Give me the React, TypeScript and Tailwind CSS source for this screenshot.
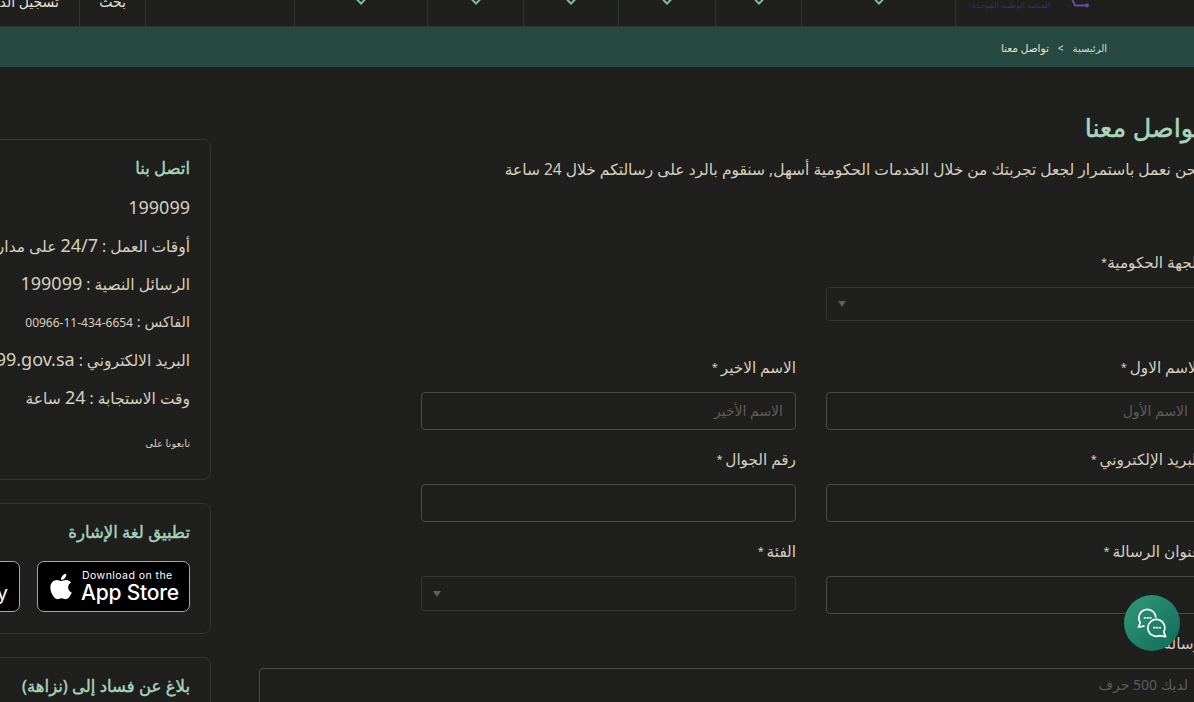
import React from 'react';
import { FaApple } from 'react-icons/fa';

const font = { fontFamily: '"Noto Sans", "DejaVu Sans", sans-serif' };

const navCells = ['w-[133px]', 'w-[96px]', 'w-[95px]', 'w-[97px]', 'w-[86px]', 'w-[154px]'];

function Chevron() {
  return (
    <svg width="14" height="9" viewBox="0 0 14 9" fill="none" className="-mt-[3px]">
      <path d="M2 1.5 L7 6.5 L12 1.5" stroke="#7abda3" strokeWidth="2" />
    </svg>
  );
}

function Label({ text, star }: { text: string; star?: string }) {
  return (
    <div className="h-[24px] whitespace-nowrap text-[15.25px] leading-[24px] text-[#d6d0bf]">
      {text}
      {star && <span className="align-[2px] text-[11px]">{star}</span>}
    </div>
  );
}

function Field({ label, placeholder }: { label: string; placeholder?: string }) {
  return (
    <div className="w-[375px] shrink-0">
      <Label text={label} star=" *" />
      <input
        placeholder={placeholder}
        className="mt-[13px] block h-[38px] w-full rounded-[4px] border border-[#4a4a48] bg-transparent px-3 pb-[2px] text-sm text-[#d6d0bf] placeholder:text-[#5d5d5a]"
      />
    </div>
  );
}

function SelectBox({ className }: { className: string }) {
  return (
    <div dir="ltr" className={`flex w-[375px] items-center rounded-[3px] border border-[#343432] pl-[11px] ${className}`}>
      <div className="h-0 w-0 border-x-[4px] border-t-[6px] border-x-transparent border-t-[#5e5e5b]" />
    </div>
  );
}

function Card({ title, className, children }: { title: string; className?: string; children?: React.ReactNode }) {
  return (
    <section className={`rounded-lg border border-[#2c3632] pr-[20px] pt-[15px] ${className ?? ''}`}>
      <h3 className="whitespace-nowrap text-[16.5px] font-normal leading-[26px] text-[#a9d5bb] [-webkit-text-stroke:0.4px_#a9d5bb]">{title}</h3>
      {children}
    </section>
  );
}

function Latin({ children, size = 'text-[18px]' }: { children: React.ReactNode; size?: string }) {
  return <span dir="ltr" className={`inline-block ${size}`}>{children}</span>;
}

export default function App() {
  return (
    <div dir="rtl" className="relative h-[702px] w-[1194px] overflow-hidden bg-[#1f1f1e]" style={font}>
      {/* top nav, only the bottom of it is in the picture */}
      <header dir="ltr" className="flex h-[27px] border-b border-[#2e3532]">
        <div className="w-[80px] shrink-0 overflow-hidden border-r border-[#2e3532] pr-[20px] text-right">
          <div dir="rtl" className="-mt-[8px] whitespace-nowrap text-sm leading-[20px] text-[#e6e0cf]">تسجيل الدخول</div>
        </div>
        <div className="w-[66px] shrink-0 overflow-hidden border-r border-[#2e3532] text-center">
          <div dir="rtl" className="-mt-[8px] text-sm leading-[20px] text-[#e6e0cf]">بحث</div>
        </div>
        <div className="w-[149px] shrink-0 border-r border-[#2e3532]" />
        {navCells.map((width) => (
          <div key={width} className={`${width} flex shrink-0 justify-center overflow-hidden border-r border-[#2e3532]`}>
            <Chevron />
          </div>
        ))}
        <div className="flex flex-1 items-start overflow-hidden pl-[16px]">
          <div dir="rtl" className="-mt-[1px] w-[78px] whitespace-nowrap text-[8px] leading-[12px] text-[#3b2f63]">المنصة الوطنية الموحدة</div>
          <svg width="30" height="10" viewBox="0 0 30 10" fill="none" className="-mt-[1px] ml-[20px]">
            <path d="M2 0 L5 6.5 H17" stroke="#6b4aa0" strokeWidth="2" />
            <circle cx="17" cy="6.5" r="2" fill="#6b4aa0" />
          </svg>
        </div>
      </header>

      {/* breadcrumb */}
      <div className="flex h-[40px] items-center gap-[9px] bg-[#264a42] pr-[87px] pt-[3px] text-[10px] text-[#e6e0cf]">
        <span className="text-[#cfe0d2]">الرئيسية</span>
        <span>&gt;</span>
        <span className="text-[10.5px]">تواصل معنا</span>
      </div>

      <main dir="ltr" className="flex">
        <aside dir="rtl" className="-ml-[90px] mt-[72px] w-[301px] shrink-0">
          <Card title="اتصل بنا" className="h-[341px]">
            <div className="mt-[7px] flex flex-col whitespace-nowrap text-[15.5px] leading-[38px] text-[#d6d0bf]">
              <div className="h-[38px]"><Latin>199099</Latin></div>
              <div className="h-[38px]">أوقات العمل : <Latin>24/7</Latin> على مدار الساعة</div>
              <div className="h-[38px]">الرسائل النصية : <Latin>199099</Latin></div>
              <div className="h-[38px] text-[14.5px]">الفاكس : <Latin size="text-xs">00966-11-434-6654</Latin></div>
              <div className="h-[38px]">البريد الالكتروني : <Latin>info@199099.gov.sa</Latin></div>
              <div className="h-[38px]">وقت الاستجابة : <Latin>24</Latin> ساعة</div>
            </div>
            <div className="mt-[20px] text-[10px] text-[#d6d0bf]">تابعونا على</div>
          </Card>

          <Card title="تطبيق لغة الإشارة" className="mt-[23px] h-[131px]">
            <div dir="ltr" className="mt-[16px] flex justify-end gap-[17px] font-['Inter',sans-serif] text-white">
              <div className="flex h-[51px] w-[134px] shrink-0 items-end justify-end whitespace-nowrap rounded-[7px] border border-[#a6a6a6] bg-black pb-[5px] pr-[11px] text-[20px] leading-[26px]">
                Google Play
              </div>
              <div className="flex h-[51px] w-[153px] shrink-0 items-center rounded-[7px] border border-[#a6a6a6] bg-black pl-[12px]">
                <FaApple className="h-[29px] w-[22px]" />
                <div className="ml-[10px]">
                  <div className="text-[10.5px] leading-[12px] tracking-[0.45px]">Download on the</div>
                  <div className="-ml-[1px] text-[21px] font-medium leading-[22px] tracking-[-0.2px]">App Store</div>
                </div>
              </div>
            </div>
          </Card>

          <Card title="بلاغ عن فساد إلى (نزاهة)" className="mt-[23px] h-[100px]" />
        </aside>

        <div dir="rtl" className="ml-[48px] w-[942px] shrink-0">
          <h1 className="mt-[44px] whitespace-nowrap text-[25.5px] font-normal leading-[32px] text-[#a9d5bb] [-webkit-text-stroke:0.5px_#a9d5bb]">تواصل معنا</h1>
          <p className="mt-[15px] whitespace-nowrap text-[15.5px] text-[#d6d0bf]">نحن نعمل باستمرار لجعل تجربتك من خلال الخدمات الحكومية أسهل, سنقوم بالرد على رسالتكم خلال 24 ساعة</p>

          <div className="mt-[69px] w-[375px]">
            <Label text="الجهة الحكومية" star="*" />
            <SelectBox className="mt-[13px] h-[34px]" />
          </div>

          <div className="mt-[34px] flex gap-[30px]">
            <Field label="الاسم الاول" placeholder="الاسم الأول" />
            <Field label="الاسم الاخير" placeholder="الاسم الأخير" />
          </div>
          <div className="mt-[17px] flex gap-[30px]">
            <Field label="البريد الإلكتروني" />
            <Field label="رقم الجوال" />
          </div>
          <div className="mt-[17px] flex gap-[30px]">
            <Field label="عنوان الرسالة" />
            <div className="w-[375px] shrink-0">
              <Label text="الفئة" star=" *" />
              <SelectBox className="mt-[13px] h-[35px]" />
            </div>
          </div>

          <div className="mt-[17px]"><Label text="رسالة" /></div>
          <textarea
            placeholder="لديك 500 حرف"
            className="mt-[13px] block h-[120px] w-full rounded-[4px] border border-[#4a4a48] bg-transparent px-3 py-[6px] text-sm placeholder:text-[#5d5d5a]"
          />
        </div>
      </main>

      <button className="absolute left-[1124px] top-[595px] flex h-[56px] w-[56px] items-center justify-center rounded-full bg-gradient-to-br from-[#329a77] to-[#0d6b5c]">
        <svg width="30" height="30" viewBox="0 0 32 32" fill="none" stroke="white" strokeWidth="1.8" strokeLinejoin="round">
          <path d="M8 19 L1.5 20.5 L3.5 15.5 A9 9 0 1 1 20 10.5" />
          <path d="M24 29.5 A9 9 0 1 1 28.5 25.5 L30.5 30.5 Z" />
          <path d="M8 10.5h.8M11 10.5h.8M14 10.5h.8M18 21h.8M21 21h.8M24 21h.8" strokeLinecap="round" />
        </svg>
      </button>
    </div>
  );
}
